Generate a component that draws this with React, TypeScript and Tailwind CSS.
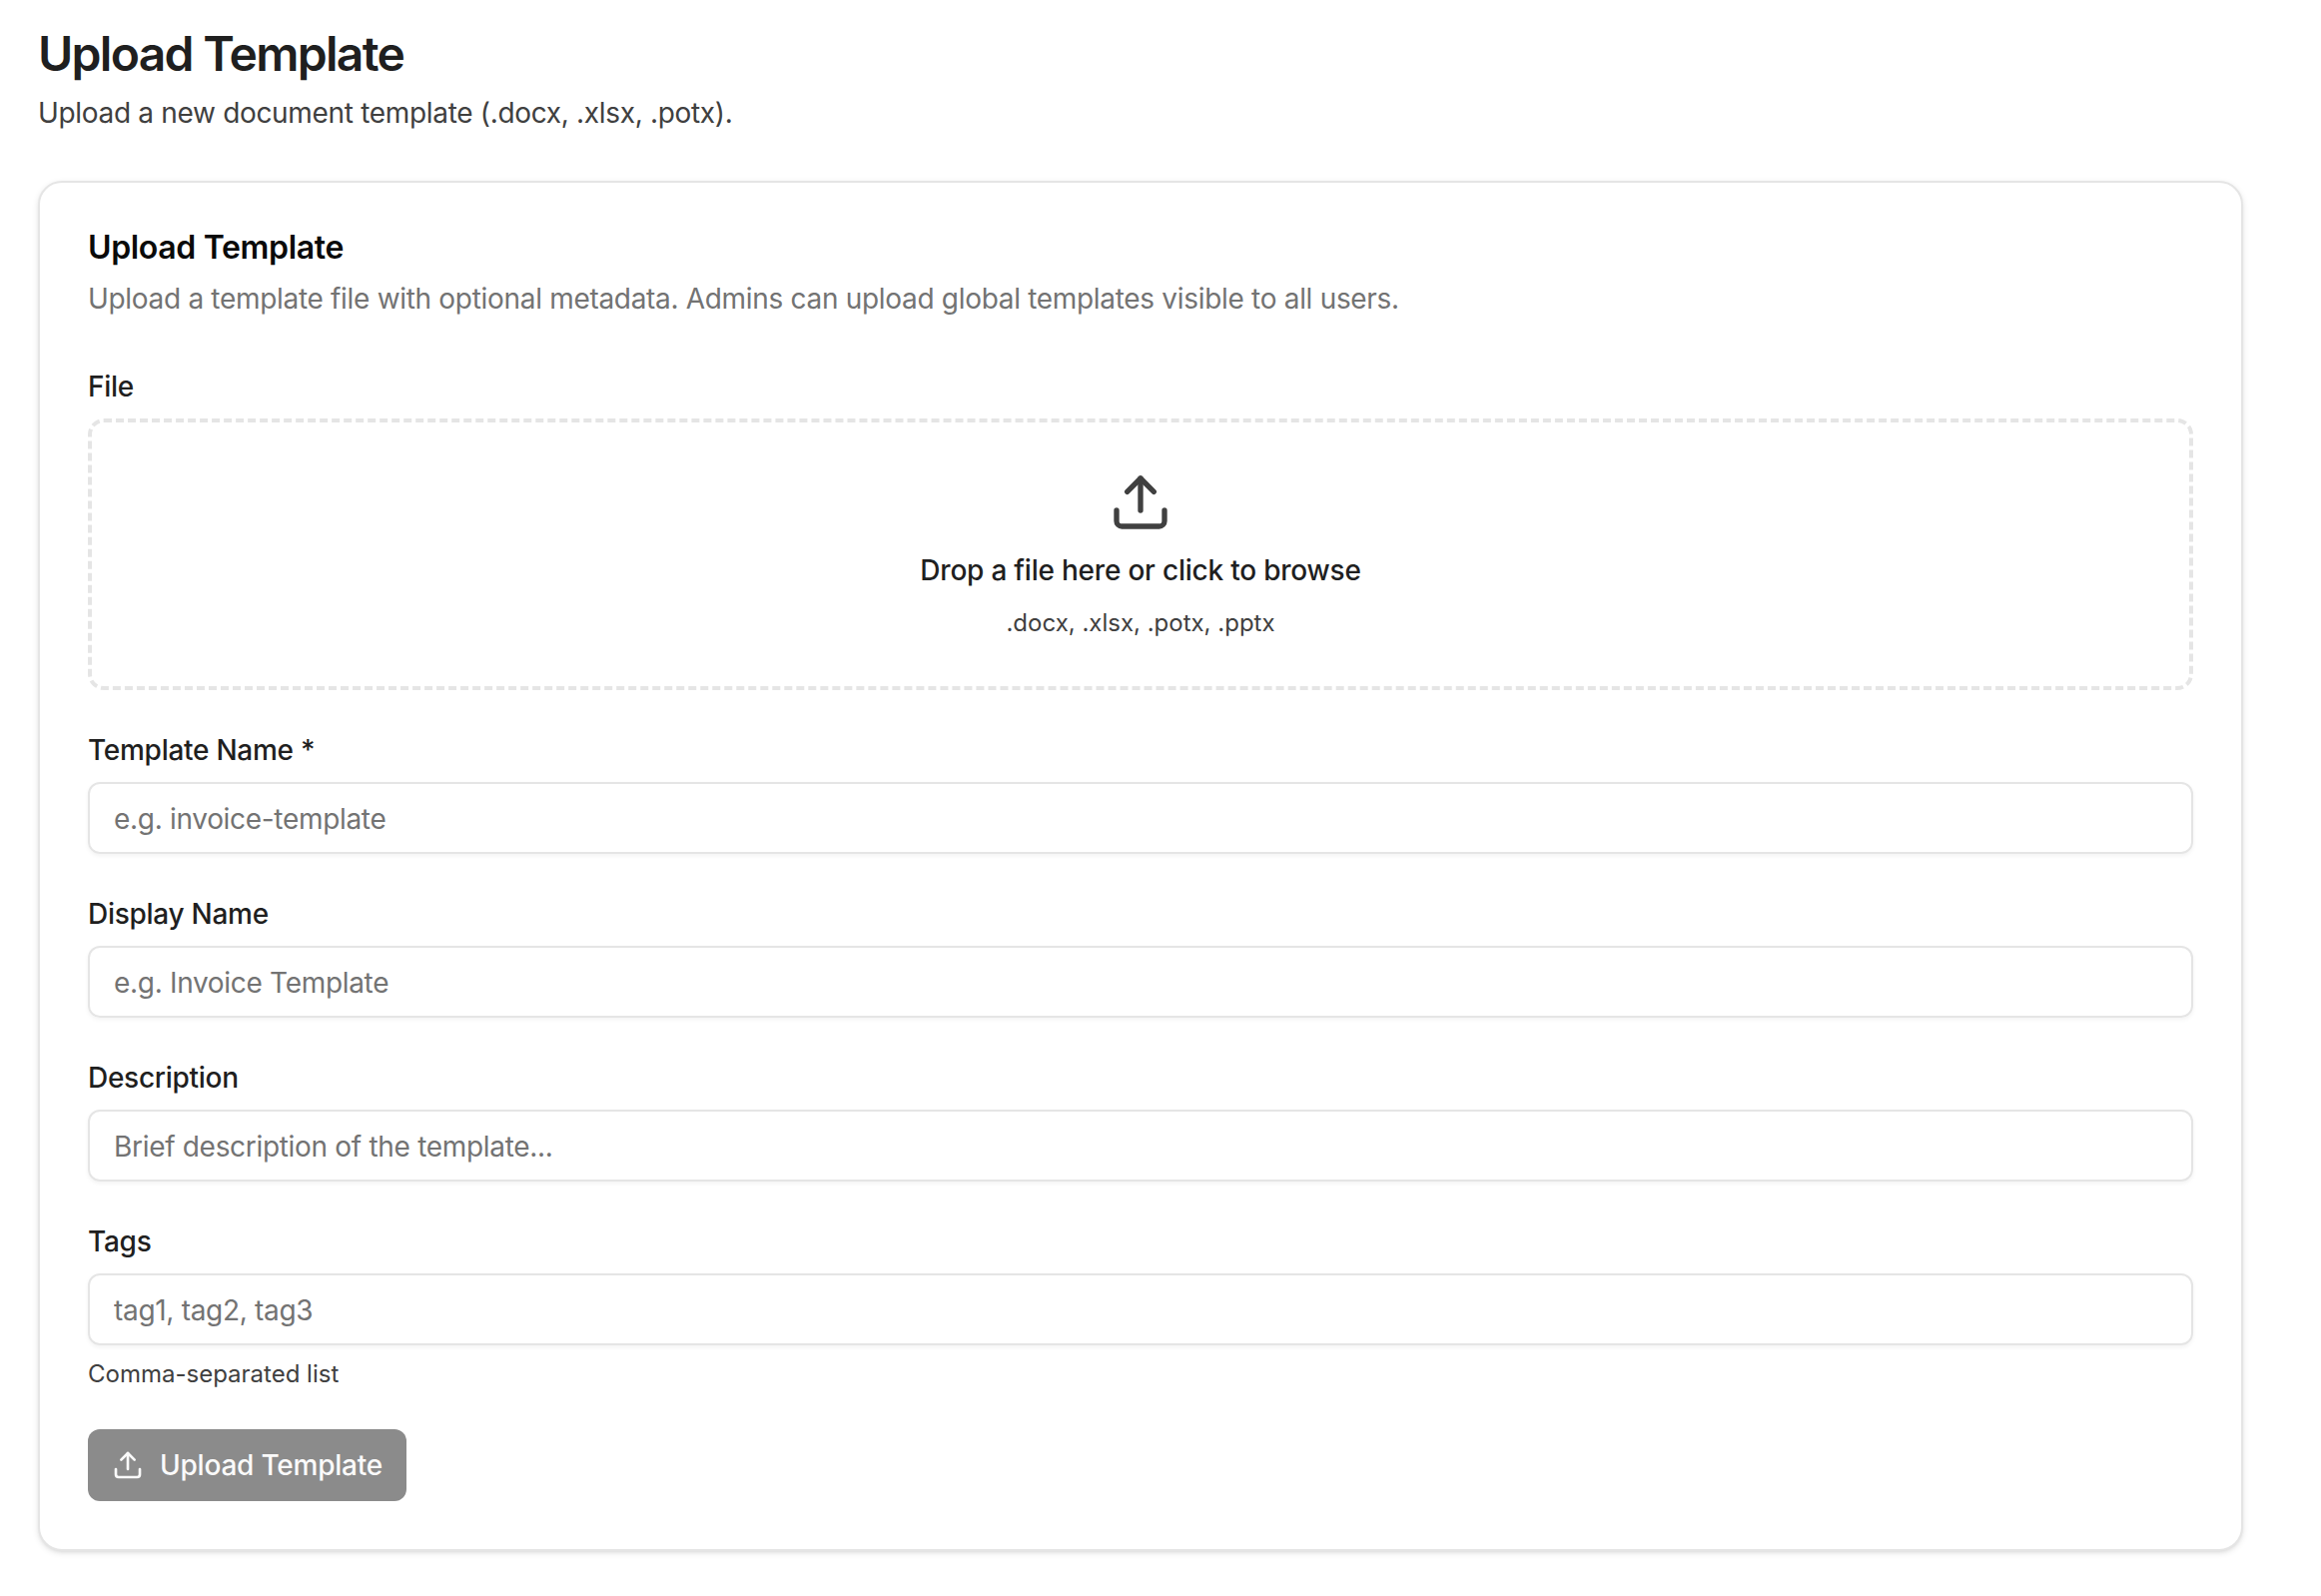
import { Upload } from 'lucide-react';

type FieldProps = {
  id: string;
  label: string;
  placeholder: string;
  hint?: string;
};

const Field = ({ id, label, placeholder, hint }: FieldProps) => {
  return (
    <div className="flex flex-col gap-3">
      <label htmlFor={id} className="text-[28px] leading-10 font-medium tracking-[-0.27px] text-[#1f1f1f]">{label}</label>
      <input
        id={id}
        placeholder={placeholder}
        className="h-18 w-full rounded-xl border-2 border-neutral-200 bg-transparent px-6 pt-0.5 text-[28px] tracking-[-0.31px] shadow-[0_2px_4px_0_rgba(0,0,0,0.05)] outline-none placeholder:text-neutral-500"
      />
      {hint && <p className="h-8 pt-px text-2xl leading-8 text-neutral-700">{hint}</p>}
    </div>
  );
};

const App = () => {
  return (
    <main className="min-h-[1598px] bg-white pt-[23px] pr-[78px] pb-[45px] pl-[38px] font-['Inter',sans-serif] antialiased">
      <header className="mb-12 space-y-2">
        <h1 className="text-5xl leading-[62px] font-semibold tracking-[-1.7px] text-[#1f1f1f]">Upload Template</h1>
        <p className="text-[28px] leading-10 tracking-[-0.32px] text-neutral-700">Upload a new document template (.docx, .xlsx, .potx).</p>
      </header>

      <section className="rounded-3xl border-2 border-neutral-200 bg-white p-12 shadow-[0_2px_6px_0_rgba(0,0,0,0.1),0_2px_4px_-2px_rgba(0,0,0,0.1)]">
        <div className="mb-12 space-y-4">
          <h2 className="pt-0.5 text-[32px] leading-[30px] font-semibold tracking-[-0.34px] text-neutral-950">Upload Template</h2>
          <p className="text-[28px] leading-10 tracking-[-0.31px] text-neutral-500">
            Upload a template file with optional metadata. Admins can upload global templates visible to all users.
          </p>
        </div>

        <form className="flex flex-col gap-10">
          <div className="flex flex-col gap-3">
            <span className="text-[28px] leading-10 font-medium tracking-[-0.27px] text-[#1f1f1f]">File</span>
            <div className="flex cursor-pointer flex-col items-center gap-4 rounded-2xl border-4 border-dashed border-neutral-200 p-12">
              <Upload size={64} className="text-neutral-700" />
              <p className="text-[28px] leading-10 font-medium tracking-[-0.22px] text-[#1f1f1f]">Drop a file here or click to browse</p>
              <p className="h-8 pt-px text-2xl leading-8 text-neutral-700">.docx, .xlsx, .potx, .pptx</p>
            </div>
          </div>

          <Field id="name" label="Template Name *" placeholder="e.g. invoice-template" />
          <Field id="display-name" label="Display Name" placeholder="e.g. Invoice Template" />
          <Field id="description" label="Description" placeholder="Brief description of the template..." />
          <Field id="tags" label="Tags" placeholder="tag1, tag2, tag3" hint="Comma-separated list" />

          <button
            type="submit"
            disabled
            className="flex h-18 w-[319px] items-center gap-4 rounded-xl bg-[#8b8b8b] px-6 text-[28px] font-medium tracking-[-0.22px] whitespace-nowrap text-neutral-50"
          >
            <Upload size={32} className="shrink-0" />
            Upload Template
          </button>
        </form>
      </section>
    </main>
  );
};

export default App;
